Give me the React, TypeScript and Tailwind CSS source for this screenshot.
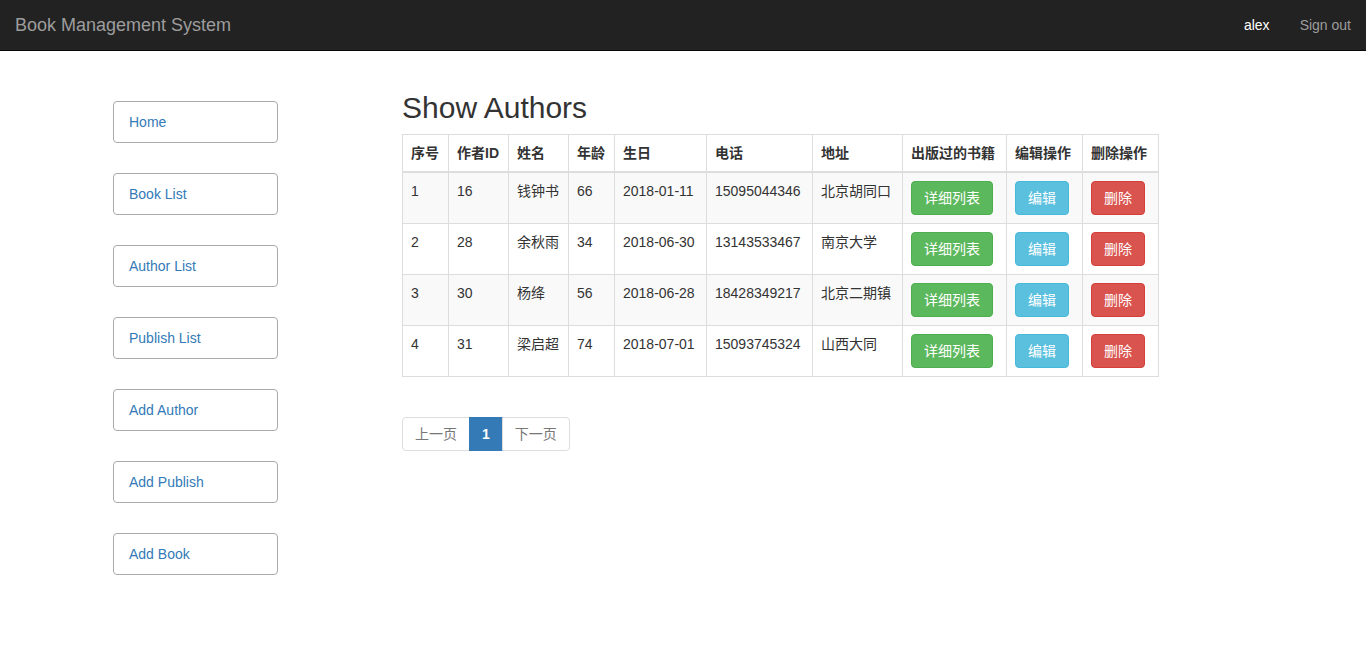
import React from 'react';

const font = { fontFamily: '"Liberation Sans", "Noto Sans CJK SC", sans-serif' };

const navItems = ['Home', 'Book List', 'Author List', 'Publish List', 'Add Author', 'Add Publish', 'Add Book'];

const authors = [
  { no: 1, id: 16, name: '钱钟书', age: 66, birthday: '2018-01-11', phone: '15095044346', addr: '北京胡同口' },
  { no: 2, id: 28, name: '余秋雨', age: 34, birthday: '2018-06-30', phone: '13143533467', addr: '南京大学' },
  { no: 3, id: 30, name: '杨绛', age: 56, birthday: '2018-06-28', phone: '18428349217', addr: '北京二期镇' },
  { no: 4, id: 31, name: '梁启超', age: 74, birthday: '2018-07-01', phone: '15093745324', addr: '山西大同' },
];

const headers = ['序号', '作者ID', '姓名', '年龄', '生日', '电话', '地址', '出版过的书籍', '编辑操作', '删除操作'];
const widths = [46, 60, 60, 46, 92, 106, 90, 104, 76, 76];

const btn = 'inline-block px-3 py-[6px] text-sm leading-5 text-white border rounded';

export default function App() {
  return (
    <div className="min-h-screen bg-white text-[#333] text-sm" style={font}>
      <nav className="h-[51px] bg-[#222] border-b border-[#080808] flex items-center justify-between pl-[15px]">
        <span className="text-[18px] text-[#9d9d9d] leading-5">Book Management System</span>
        <div className="flex h-full items-center">
          <span className="px-[15px] text-white">alex</span>
          <span className="px-[15px] text-[#9d9d9d]">Sign out</span>
        </div>
      </nav>

      <div className="flex">
        <aside className="w-[402px] shrink-0 pl-[113px] pt-[50px]">
          <ul className="flex flex-col gap-[30px]">
            {navItems.map((item) => (
              <li key={item}>
                <a className="block w-[165px] h-[42px] leading-5 px-[15px] py-[10px] border border-[#aaa] rounded text-[#337ab7]">
                  {item}
                </a>
              </li>
            ))}
          </ul>
        </aside>

        <main className="pt-[40px]">
          <h2 className="text-[30px] leading-[33px] mb-[10px] font-normal">Show Authors</h2>
          <table className="table-fixed border-collapse w-[756px] border border-[#ddd]">
            <colgroup>
              {widths.map((w, i) => (
                <col key={i} style={{ width: w }} />
              ))}
            </colgroup>
            <thead>
              <tr>
                {headers.map((h) => (
                  <th key={h} className="text-left font-bold p-2 leading-5 border border-[#ddd] border-b-2 whitespace-nowrap">
                    {h}
                  </th>
                ))}
              </tr>
            </thead>
            <tbody>
              {authors.map((a, i) => (
                <tr key={a.id} className={i % 2 === 0 ? 'bg-[#f9f9f9]' : 'bg-white'}>
                  {[a.no, a.id, a.name, a.age, a.birthday, a.phone, a.addr].map((v, j) => (
                    <td key={j} className="p-2 leading-5 align-top border border-[#ddd] whitespace-nowrap">
                      {v}
                    </td>
                  ))}
                  <td className="p-2 align-top border border-[#ddd]">
                    <button className={`${btn} bg-[#5cb85c] border-[#4cae4c]`}>详细列表</button>
                  </td>
                  <td className="p-2 align-top border border-[#ddd]">
                    <button className={`${btn} bg-[#5bc0de] border-[#46b8da]`}>编辑</button>
                  </td>
                  <td className="p-2 align-top border border-[#ddd]">
                    <button className={`${btn} bg-[#d9534f] border-[#d43f3a]`}>删除</button>
                  </td>
                </tr>
              ))}
            </tbody>
          </table>

          <ul className="flex mt-[40px]">
            <li className="px-3 py-[6px] leading-5 border border-[#ddd] rounded-l text-[#777]">上一页</li>
            <li className="px-3 py-[6px] leading-5 border border-[#337ab7] bg-[#337ab7] text-white font-bold -ml-px">1</li>
            <li className="px-3 py-[6px] leading-5 border border-[#ddd] rounded-r text-[#777] -ml-px">下一页</li>
          </ul>
        </main>
      </div>
    </div>
  );
}
